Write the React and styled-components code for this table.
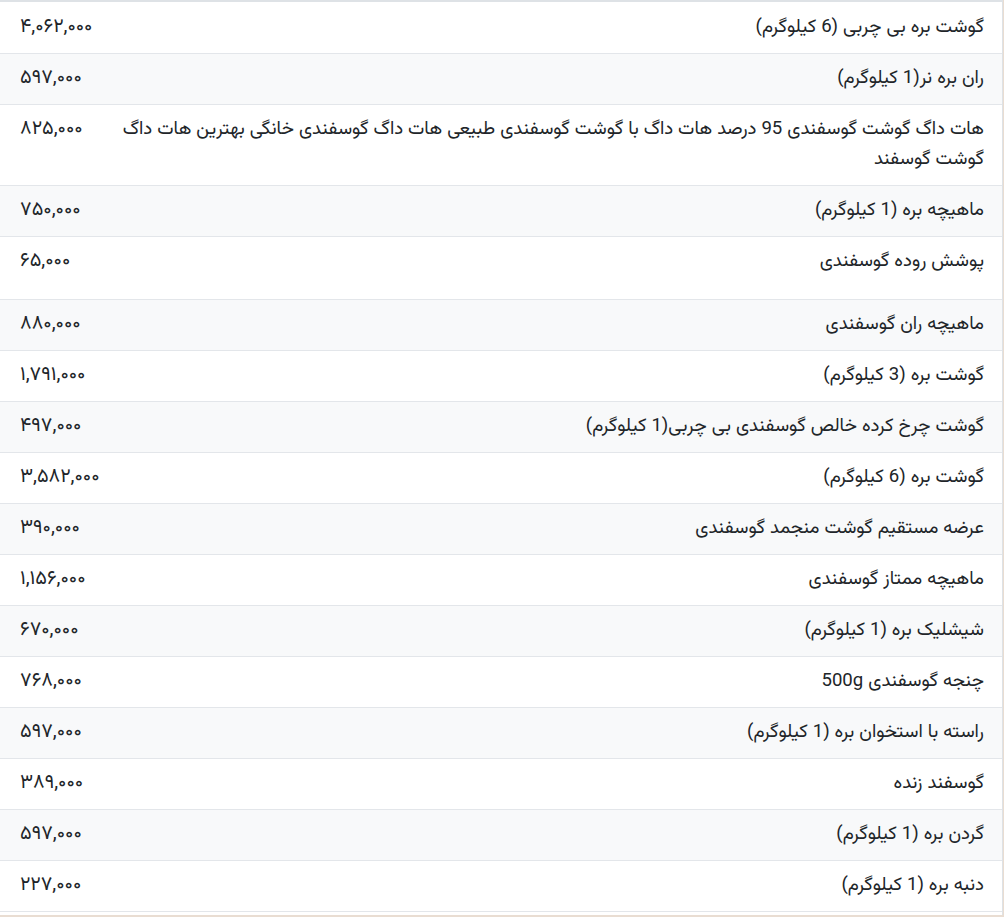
import React from "react";
import styled, { createGlobalStyle } from "styled-components";

const GlobalStyle = createGlobalStyle`
  html, body {
    margin: 0;
    padding: 0;
    background: #ffffff;
  }
  body {
    font-family: "Vazirmatn", "Noto Sans Arabic", "DejaVu Sans", sans-serif;
    color: #212529;
  }
`;

const Wrapper = styled.div`
  width: 1004px;
  height: 917px;
  overflow: hidden;
  background: #e9ddd2;
`;

const TableFrame = styled.div`
  width: 1002px;
  background: #ffffff;
  border-top: 2px solid #dee2e6;
  border-right: 1px solid #dee2e6;
  padding-top: 1px;
  padding-bottom: 3px;
`;

const PriceTable = styled.table`
  direction: rtl;
  width: 100%;
  border-collapse: collapse;
`;

const Row = styled.tr`
  border-bottom: 1px solid #e3e6ea;
  &:nth-child(even) {
    background: #f8f9fa;
  }
`;

const NameCell = styled.td`
  padding: 10px 18px ${(p) => (p.$tall ? "22px" : "10px")} 14px;
  font-size: 18.6px;
  line-height: 30px;
  text-align: right;
  vertical-align: top;
`;

const PriceCell = styled.td`
  width: 84px;
  padding: 10px 0 10px 20px;
  font-size: 19.8px;
  line-height: 30px;
  text-align: left;
  vertical-align: top;
  white-space: nowrap;
`;

const items = [
  ["گوشت بره بی چربی (6 کیلوگرم)", "۴,۰۶۲,۰۰۰"],
  ["ران بره نر(1 کیلوگرم)", "۵۹۷,۰۰۰"],
  [
    "هات داگ گوشت گوسفندی 95 درصد هات داگ با گوشت گوسفندی طبیعی هات داگ گوسفندی خانگی بهترین هات داگ گوشت گوسفند",
    "۸۲۵,۰۰۰",
  ],
  ["ماهیچه بره (1 کیلوگرم)", "۷۵۰,۰۰۰"],
  ["پوشش روده گوسفندی", "۶۵,۰۰۰", true],
  ["ماهیچه ران گوسفندی", "۸۸۰,۰۰۰"],
  ["گوشت بره (3 کیلوگرم)", "۱,۷۹۱,۰۰۰"],
  ["گوشت چرخ کرده خالص گوسفندی بی چربی(1 کیلوگرم)", "۴۹۷,۰۰۰"],
  ["گوشت بره (6 کیلوگرم)", "۳,۵۸۲,۰۰۰"],
  ["عرضه مستقیم گوشت منجمد گوسفندی", "۳۹۰,۰۰۰"],
  ["ماهیچه ممتاز گوسفندی", "۱,۱۵۶,۰۰۰"],
  ["شیشلیک بره (1 کیلوگرم)", "۶۷۰,۰۰۰"],
  ["چنجه گوسفندی 500g", "۷۶۸,۰۰۰"],
  ["راسته با استخوان بره (1 کیلوگرم)", "۵۹۷,۰۰۰"],
  ["گوسفند زنده", "۳۸۹,۰۰۰"],
  ["گردن بره (1 کیلوگرم)", "۵۹۷,۰۰۰"],
  ["دنبه بره (1 کیلوگرم)", "۲۲۷,۰۰۰"],
];

export default function App() {
  return (
    <Wrapper>
      <GlobalStyle />
      <TableFrame>
        <PriceTable>
          <tbody>
            {items.map(([name, price, tall], i) => (
              <Row key={i}>
                <NameCell $tall={tall}>{name}</NameCell>
                <PriceCell>{price}</PriceCell>
              </Row>
            ))}
          </tbody>
        </PriceTable>
      </TableFrame>
    </Wrapper>
  );
}
